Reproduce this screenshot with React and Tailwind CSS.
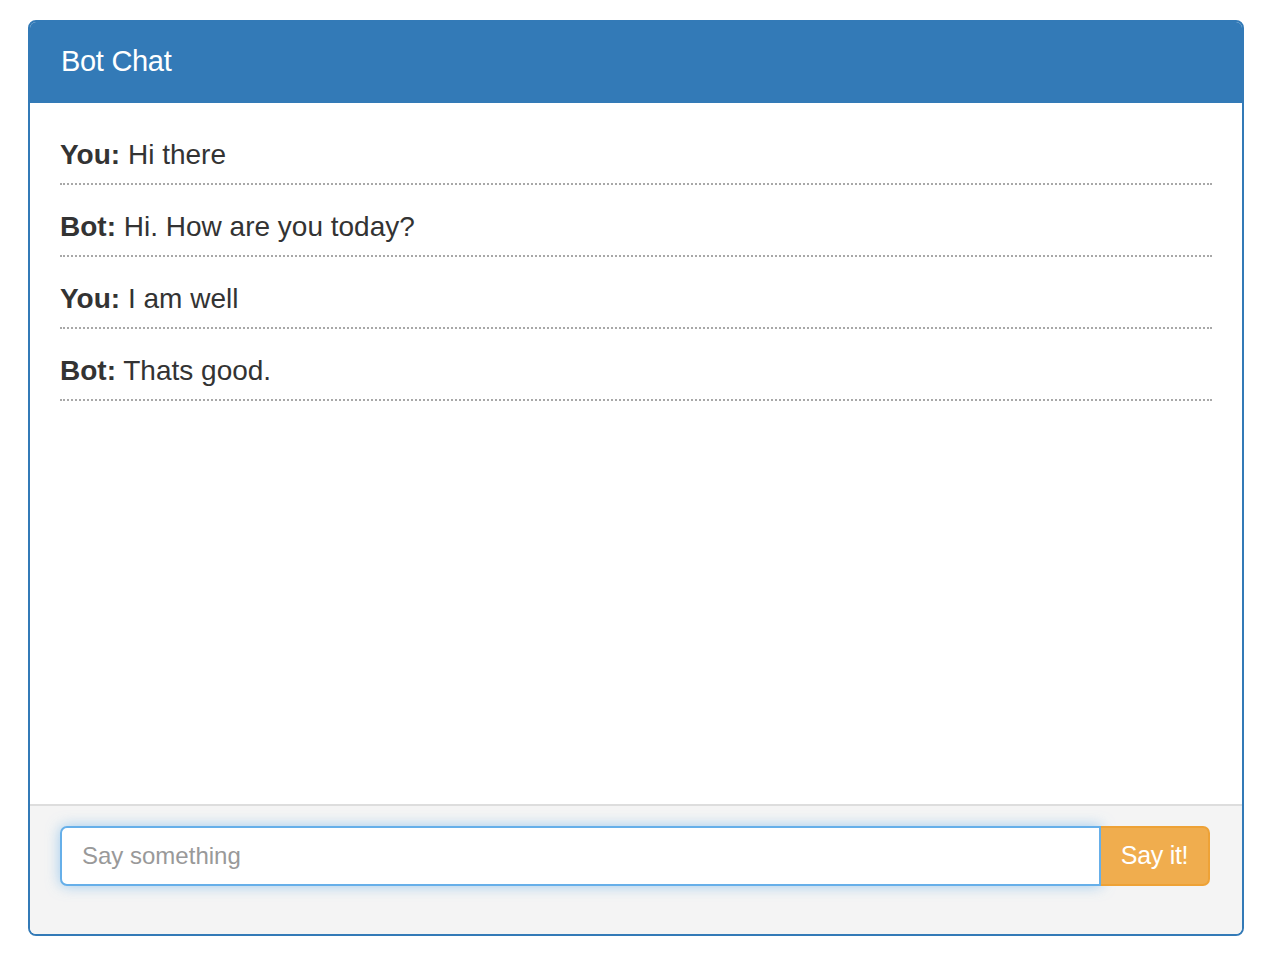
import { useState } from "react";

const MESSAGES = [
  { from: "You", text: "Hi there" },
  { from: "Bot", text: "Hi. How are you today?" },
  { from: "You", text: "I am well" },
  { from: "Bot", text: "Thats good." },
];

export default function App() {
  const [draft, setDraft] = useState("");

  return (
    <div
      className="min-h-screen bg-white pl-[28px] pt-[20px]"
      style={{ fontFamily: '"Liberation Sans", Arial, sans-serif' }}
    >
      <div className="w-[1216px] h-[916px] flex flex-col rounded-[8px] border-2 border-[#337ab7] overflow-hidden">
        {/* heading */}
        <div className="h-[83px] shrink-0 bg-[#337ab7] flex items-center -mx-[2px] -mt-[2px] pl-[33px] pb-[1px]">
          <h3 className="text-[29px] leading-none text-white tracking-[-0.3px]">Bot Chat</h3>
        </div>

        {/* messages */}
        <div className="h-[701px] shrink-0 bg-white px-[30px] pt-[38px]">
          {MESSAGES.map((msg, i) => (
            <div
              key={i}
              className="pt-[28px] pb-[14px] text-[28px] leading-[28px] text-[#333] border-b-2 border-dotted border-[#a8a8a8] first:pt-0"
            >
              <strong className="font-bold">{msg.from}:</strong> {msg.text}
            </div>
          ))}
        </div>

        {/* footer */}
        <div className="flex-1 bg-[#f4f4f4] border-t-2 border-[#dddddd] pl-[30px] pr-[32px] pt-[20px]">
          <div className="flex h-[60px]">
            <input
              type="text"
              value={draft}
              onChange={(e) => setDraft(e.target.value)}
              placeholder="Say something"
              className="flex-1 min-w-0 bg-white border-2 border-[#66afe9] rounded-l-[7px] px-[20px] text-[24px] text-[#555] placeholder-[#999] outline-none shadow-[0_0_14px_rgba(102,175,233,0.6)]"
            />
            <button
              type="button"
              className="w-[109px] shrink-0 bg-[#f0ad4e] border-2 border-l-0 border-[#eea236] rounded-r-[7px] text-[25px] text-white tracking-[-0.3px]"
            >
              Say it!
            </button>
          </div>
        </div>
      </div>
    </div>
  );
}
